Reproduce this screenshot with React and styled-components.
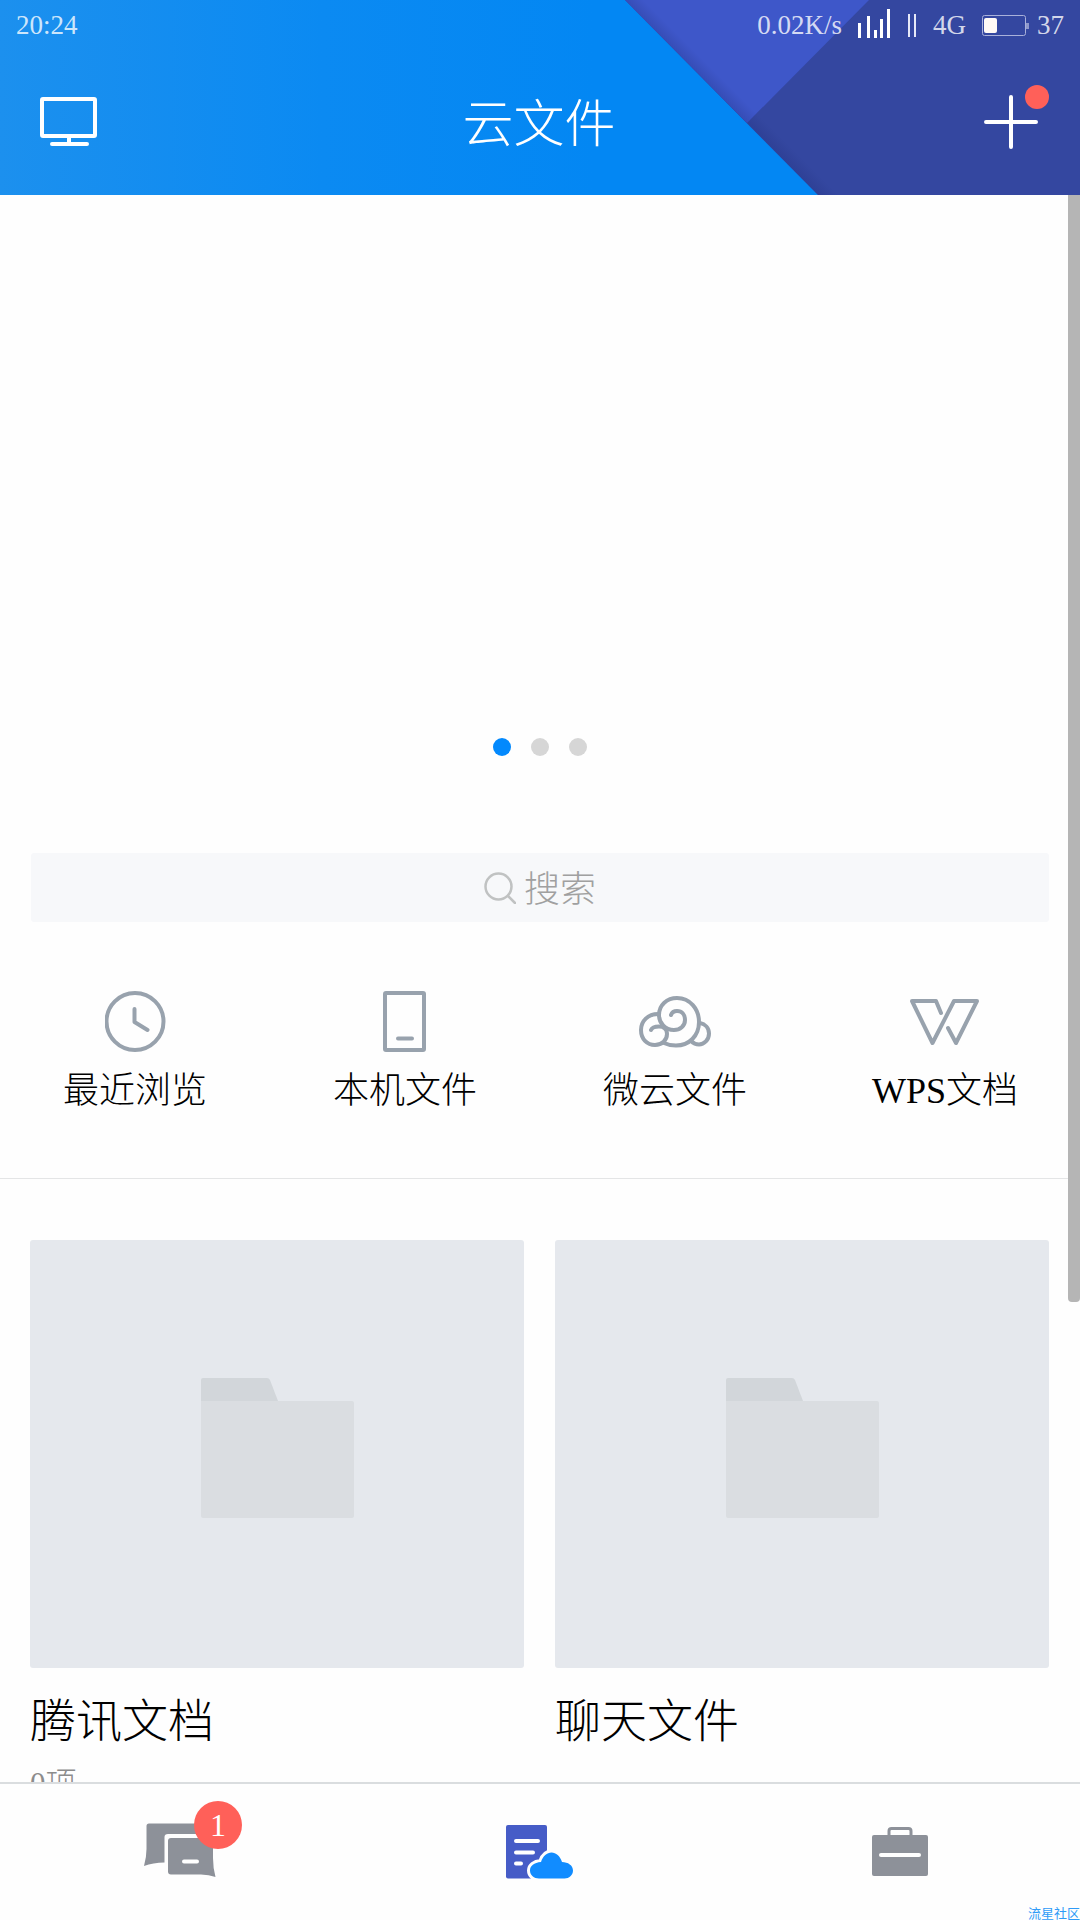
import React from "react";
import styled, { createGlobalStyle } from "styled-components";

const GlobalStyle = createGlobalStyle`
  * { box-sizing: border-box; }
  body {
    margin: 0;
    background: #fefefe;
    color: #000;
    font-family: "Liberation Serif", "Noto Sans CJK SC", serif;
    font-weight: 300;
  }
  button, input { font: inherit; }
`;

const Screen = styled.div`
  position: relative;
  display: flex;
  flex-direction: column;
  height: 100vh;
  overflow: hidden;
`;

/* Header */

const Header = styled.header`
  position: relative;
  flex: none;
  color: #fff;
  background: linear-gradient(90deg, #1c90ee 0%, #0b8af2 30%, #0387f3 55%);
`;

const HeaderArt = styled.svg`
  position: absolute;
  top: 0;
  right: 0;
  width: 455px;
  height: 100%;
`;

const StatusBar = styled.div`
  position: relative;
  display: flex;
  align-items: center;
  justify-content: space-between;
  height: 50px;
  padding: 0 16px;
  font-size: 27px;
  line-height: 32px;
  color: rgba(255, 255, 255, 0.8);
`;

const StatusGroup = styled.div`
  display: flex;
  align-items: center;
  gap: ${(p) => p.$gap}px;
`;

const TitleBar = styled.div`
  position: relative;
  display: grid;
  grid-template-columns: 1fr auto 1fr;
  align-items: center;
  height: 145px;
  padding: 0 42px 2px 40px;
`;

const Title = styled.h1`
  margin: 0;
  padding-top: 6px;
  font-size: 51px;
  line-height: 64px;
  font-weight: 300;
`;

const IconButton = styled.button`
  position: relative;
  display: flex;
  justify-self: ${(p) => p.$side};
  padding: 0;
  border: 0;
  background: none;
  color: inherit;
`;

const AlertDot = styled.span`
  position: absolute;
  top: -10px;
  right: -11px;
  width: 24px;
  height: 24px;
  border-radius: 50%;
  background: #ff6059;
`;

/* Content */

const Content = styled.main`
  flex: 1;
  min-height: 0;
  overflow: hidden;
`;

const Banner = styled.section`
  display: flex;
  align-items: flex-end;
  justify-content: center;
  gap: 20px;
  height: 658px;
  padding-bottom: 97px;
`;

const PageDot = styled.button`
  width: 18px;
  height: 18px;
  padding: 0;
  border: 0;
  border-radius: 50%;
  background: ${(p) => (p.$active ? "#0389fd" : "#d6d6d6")};
`;

const SearchBox = styled.label`
  display: flex;
  align-items: center;
  justify-content: center;
  gap: 8px;
  height: 69px;
  margin: 0 31px;
  border-radius: 3px;
  background: #f7f8fa;
  color: #c0c2c2;
`;

const SearchInput = styled.input`
  width: 72px;
  height: 56px;
  padding: 4px 0 0;
  border: 0;
  outline: 0;
  background: none;
  font-size: 36px;
  color: #000;
  &::placeholder { color: #a0a0a0; opacity: 1; }
`;

const Shortcuts = styled.nav`
  display: grid;
  grid-template-columns: repeat(4, 1fr);
  padding: 69px 0 61px;
  border-bottom: 1px solid #e4e5e6;
`;

const Shortcut = styled.a`
  display: flex;
  flex-direction: column;
  align-items: center;
  gap: 13px;
  color: #000;
  font-size: 36px;
  line-height: 52px;
  text-decoration: none;
`;

const ShortcutIcon = styled.span`
  display: flex;
  align-items: center;
  height: 61px;
  color: #98a2ad;
`;

const Folders = styled.section`
  display: grid;
  grid-template-columns: 1fr 1fr;
  gap: 31px;
  padding: 61px 31px 30px 30px;
`;

const FolderCard = styled.a`
  display: block;
  color: #000;
  text-decoration: none;
`;

const Thumb = styled.span`
  display: flex;
  align-items: center;
  justify-content: center;
  height: 428px;
  padding-bottom: 12px;
  border-radius: 3px;
  background: #e5e8ed;
`;

const FolderName = styled.span`
  display: block;
  margin-top: 22px;
  font-size: 46px;
  line-height: 64px;
`;

const FolderCount = styled.span`
  display: block;
  margin-top: 8px;
  font-size: 31px;
  line-height: 44px;
  color: #8c8c8c;
`;

const ScrollThumb = styled.div`
  position: absolute;
  top: 195px;
  right: 0;
  width: 12px;
  height: 1107px;
  border-radius: 0 0 4px 4px;
  background: #b5b5b5;
`;

/* Bottom tabs */

const TabBar = styled.nav`
  flex: none;
  display: grid;
  grid-template-columns: repeat(3, 1fr);
  height: 138px;
  border-top: 2px solid #dadddf;
  background: #fefefe;
`;

const Tab = styled.button`
  display: flex;
  align-items: center;
  justify-content: center;
  padding: 0;
  border: 0;
  background: none;
  color: #8d9199;
`;

const TabIcon = styled.span`
  position: relative;
  display: flex;
`;

const Badge = styled.span`
  position: absolute;
  top: -22px;
  right: -26px;
  width: 48px;
  height: 48px;
  border-radius: 50%;
  background: #ff6059;
  color: #fff;
  font-size: 32px;
  line-height: 48px;
  text-align: center;
`;

const CornerMark = styled.small`
  position: absolute;
  right: 0;
  bottom: -4px;
  color: #2f9bf7;
  font-size: 13px;
  line-height: 20px;
  font-weight: 400;
`;

const stroke = {
  fill: "none",
  stroke: "currentColor",
  strokeWidth: 4,
  strokeLinecap: "round",
  strokeLinejoin: "round",
};

const HeaderShapes = () => (
  <HeaderArt viewBox="0 0 455 195" preserveAspectRatio="xMaxYMin slice" aria-hidden="true">
    <defs>
      <linearGradient id="fold" gradientUnits="userSpaceOnUse" x1="96" y1="98" x2="106" y2="88">
        <stop offset="0" stopColor="#1d2b78" stopOpacity="0.25" />
        <stop offset="1" stopColor="#1d2b78" stopOpacity="0" />
      </linearGradient>
    </defs>
    <path d="M0 0H455V195H193Z" fill="#3447a0" />
    <path d="M0 0H244L122 123Z" fill="#3e57c9" />
    <path d="M0 0H28L221 195H193Z" fill="url(#fold)" />
  </HeaderArt>
);

const SignalIcon = () => (
  <svg width="32" height="34" fill="#fff" aria-hidden="true">
    <path d="M0 15h3v15H0zM9 8h3v22H9zM16 22h3v8h-3zM22 11h3v19h-3zM29 1h3v29h-3z" />
  </svg>
);

const SimIcon = () => (
  <svg width="11" height="24" fill="#e6e9f7" aria-hidden="true">
    <path d="M2 1h2v23H2zM8 1h2v23H8z" />
  </svg>
);

const BatteryIcon = () => (
  <svg width="47" height="24" aria-hidden="true">
    <rect x="0.5" y="2.5" width="43" height="20" rx="2" fill="none" stroke="#a9b1da" />
    <rect x="2" y="5" width="13" height="15" rx="2" fill="#fffaf5" />
    <rect x="44" y="10" width="3" height="6" fill="#8f99cb" />
  </svg>
);

const MonitorIcon = () => (
  <svg width="57" height="50" aria-hidden="true" {...stroke}>
    <rect x="2" y="2" width="53" height="37" rx="1" />
    <path d="M29 40v7M12 47h35" />
  </svg>
);

const PlusIcon = () => (
  <svg width="54" height="54" aria-hidden="true" {...stroke}>
    <path d="M27 2v50M2 27h50" />
  </svg>
);

const SearchIcon = () => (
  <svg width="32" height="32" aria-hidden="true" {...stroke} strokeWidth="2.5">
    <circle cx="14.5" cy="14.5" r="13" />
    <path d="M24 24l7 7" />
  </svg>
);

const ClockIcon = () => (
  <svg width="61" height="61" aria-hidden="true" {...stroke}>
    <circle cx="30" cy="30.5" r="28.5" />
    <path d="M29.500 18v13l13 8" />
  </svg>
);

const PhoneIcon = () => (
  <svg width="45" height="61" aria-hidden="true" {...stroke}>
    <rect x="2" y="2" width="39" height="57" rx="1" />
    <path d="M15 47.5h14" />
  </svg>
);

const SwirlCloudIcon = () => (
  <svg width="72" height="52" aria-hidden="true" {...stroke}>
    <path d="M32 19C33 16 36 15 38 15C43 15 46 19 46 24C46 30 41 34 35 34C26 34 20 27 20 19C20 9 28 2 38 2C51 2 60 13 60 26C60 40 50 49.500 37 49.500C32 49.500 28 48.500 25 47" />
    <path d="M19 18C9 18 2 25 2 34C2 43 8 49 16 49C23 49 28 44 28 38C28 33 24 30.500 20 30.500C16 30.500 13 31.500 12 34" />
    <path d="M61 27C66 28 70 32 70 37.500C70 44 65 48.500 60 48.500C57 48.500 54 47 52 45" />
  </svg>
);

const WpsIcon = () => (
  <svg width="71" height="46" aria-hidden="true" {...stroke}>
    <path d="M31 14L26 2H2L22.500 44L44 2H67L46 44L38 29" />
  </svg>
);

const FolderIcon = () => (
  <svg width="153" height="140" aria-hidden="true">
    <path d="M0 2a2 2 0 0 1 2-2h64q2 0 3 2l8 21v3H0z" fill="#d2d6da" />
    <path d="M0 23h151a2 2 0 0 1 2 2v113a2 2 0 0 1-2 2H2a2 2 0 0 1-2-2z" fill="#dadde1" />
  </svg>
);

const ChatIcon = () => (
  <svg width="72" height="58" aria-hidden="true">
    <path d="M5 0.500H66V11H24Q20.500 11 20.500 14V39.500Q9 39.500 0 43Q2.500 34 2.500 26V3Q2.500 0.500 5 0.500Z" fill="currentColor" />
    <path d="M27 15H66Q69 15 69 18V35Q69 45 71.500 54Q65 51.500 57 51.500H27Q24 51.500 24 48.500V18Q24 15 27 15Z" fill="currentColor" />
    <path d="M40 38.500H53" stroke="#fff" strokeWidth="4" strokeLinecap="round" />
  </svg>
);

const cloud =
  "M33 53.500C28 53.500 24 50 24 45.500C24 41 28 37.500 35 37C37 31 41 27.500 45.500 27.500C50 27.500 54 31 56 37C62 37 67 40.500 67 45.500C67 50 63 53.500 58.500 53.500Z";

const DocCloudIcon = () => (
  <svg width="68" height="54" aria-hidden="true">
    <rect width="41" height="53.500" rx="2" fill="#465cc7" />
    <path d="M10 16h22M10 27.500h17M10 38.500h5" fill="none" stroke="#fff" strokeWidth="4" strokeLinecap="round" />
    <path d={cloud} fill="#fefefe" stroke="#fefefe" strokeWidth="6" />
    <path d={cloud} fill="#118cff" />
  </svg>
);

const BriefcaseIcon = () => (
  <svg width="57" height="50" aria-hidden="true">
    <path d="M17 9V4Q17 1.500 19.500 1.500H36.500Q39 1.500 39 4V9" fill="none" stroke="currentColor" strokeWidth="3" />
    <rect y="8" width="56" height="41" rx="2" fill="currentColor" />
    <path d="M9 28h38" stroke="#fff" strokeWidth="4" strokeLinecap="round" />
  </svg>
);

const shortcuts = [
  { label: "最近浏览", Icon: ClockIcon },
  { label: "本机文件", Icon: PhoneIcon },
  { label: "微云文件", Icon: SwirlCloudIcon },
  { label: "WPS文档", Icon: WpsIcon },
];

const folders = [
  { name: "腾讯文档", count: "0项" },
  { name: "聊天文件" },
];

export default function App() {
  return (
    <Screen>
      <GlobalStyle />
      <Header>
        <HeaderShapes />
        <StatusBar>
          <span>20:24</span>
          <StatusGroup $gap={16}>
            <span>0.02K/s</span>
            <SignalIcon />
            <SimIcon />
            <span>4G</span>
            <StatusGroup $gap={8}>
              <BatteryIcon />
              <span>37</span>
            </StatusGroup>
          </StatusGroup>
        </StatusBar>
        <TitleBar>
          <IconButton $side="start" aria-label="电脑">
            <MonitorIcon />
          </IconButton>
          <Title>云文件</Title>
          <IconButton $side="end" aria-label="添加">
            <PlusIcon />
            <AlertDot />
          </IconButton>
        </TitleBar>
      </Header>

      <Content>
        <Banner>
          {[1, 2, 3].map((n) => (
            <PageDot key={n} $active={n === 1} aria-label={`第${n}页`} />
          ))}
        </Banner>
        <SearchBox>
          <SearchIcon />
          <SearchInput type="text" placeholder="搜索" aria-label="搜索" />
        </SearchBox>
        <Shortcuts>
          {shortcuts.map(({ label, Icon }) => (
            <Shortcut key={label} href="#">
              <ShortcutIcon>
                <Icon />
              </ShortcutIcon>
              {label}
            </Shortcut>
          ))}
        </Shortcuts>
        <Folders>
          {folders.map(({ name, count }) => (
            <FolderCard key={name} href="#">
              <Thumb>
                <FolderIcon />
              </Thumb>
              <FolderName>{name}</FolderName>
              {count && <FolderCount>{count}</FolderCount>}
            </FolderCard>
          ))}
        </Folders>
      </Content>
      <ScrollThumb />

      <TabBar>
        <Tab aria-label="消息">
          <TabIcon>
            <ChatIcon />
            <Badge>1</Badge>
          </TabIcon>
        </Tab>
        <Tab aria-label="云文件">
          <TabIcon>
            <DocCloudIcon />
          </TabIcon>
        </Tab>
        <Tab aria-label="工作">
          <TabIcon>
            <BriefcaseIcon />
          </TabIcon>
        </Tab>
      </TabBar>
      <CornerMark>流星社区</CornerMark>
    </Screen>
  );
}
